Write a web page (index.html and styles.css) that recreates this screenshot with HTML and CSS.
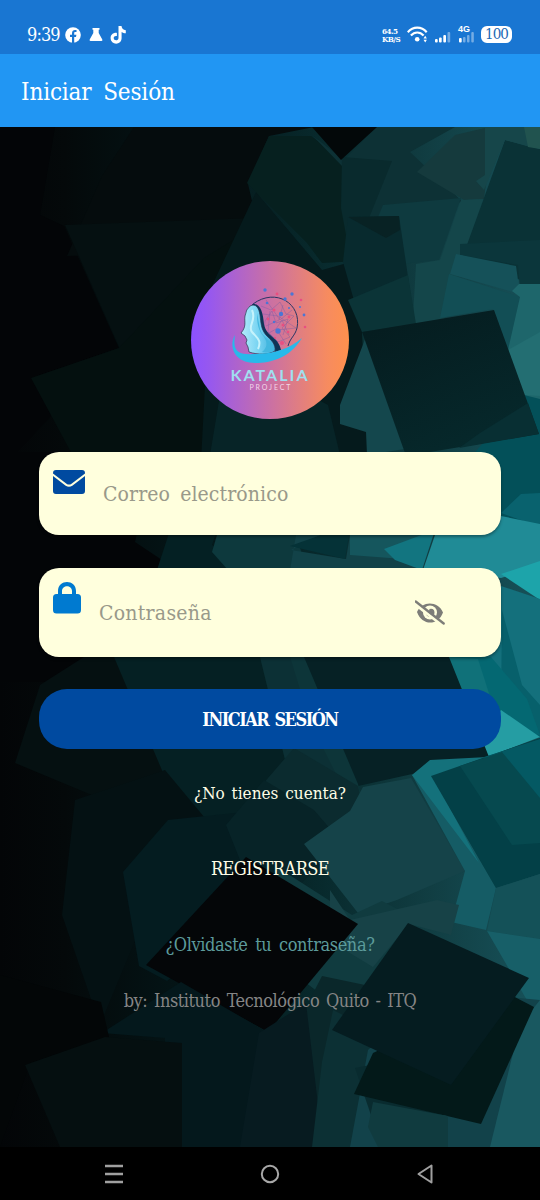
FILE: index.html
```html
<!DOCTYPE html>
<html lang="es">
<head>
<meta charset="utf-8">
<meta name="viewport" content="width=device-width">
<title>Iniciar Sesión</title>
<link rel="stylesheet" href="styles.css">
</head>
<body>
<div class="phone">
  <header class="status">
    <span class="clock">9:39</span>
    <svg class="app-icon" width="16" height="16" viewBox="0 0 16 16"><circle cx="8" cy="8" r="7.8" fill="#fff"/><path d="M7 16V10H5V7.800h2V6.300C7 4 8.300 3 10 3h1.500v2.100h-1.200c-.8 0-1.100.4-1.100 1.100v1.600h2.200L11 10H9.200v6z" fill="#1976d2"/></svg>
    <svg class="app-icon flask" width="14" height="15" viewBox="0 0 14 15"><path d="M3.500 1h7v1.700H9.700V6l3.600 6.500q.5 1.500-1 1.500H1.700q-1.500 0-1-1.500L4.300 6V2.700h-.8z" fill="#fff"/></svg>
    <svg class="app-icon tiktok" width="17" height="18" viewBox="0 0 17 18"><path d="M8.500 0h3c.2 2.300 1.800 4 4.300 4.200v3.100c-1.600 0-3-.5-4.200-1.300v6.100c0 7.500-11 7.300-11 0 0-3.500 3-5.700 6.300-5.200v3.200c-1.800-.5-3.200.5-3.200 2 0 3 4.800 3 4.800-.2z" fill="#fff"/></svg>
    <div class="signals">
      <div class="speed"><span>64.5</span><span>KB/S</span></div>
      <svg class="wifi" width="21" height="17" viewBox="0 0 21 17" fill="none" stroke="#fff" stroke-width="2.200"><path d="M.8 6.200c5.300-6 13.600-6 18.900 0M3.900 9.500c3.700-4 9-4 12.700 0"/><circle cx="10.200" cy="13.300" r="2.300" fill="#fff" stroke="none"/><path d="M16.500 12.500l1.700-2.800 1.700 2.800zM16.500 13.800l1.700 2.800 1.700-2.800z" fill="#fff" stroke="none"/></svg>
      <svg class="bars" width="16" height="11" viewBox="0 0 16 11" fill="#fff"><rect x="0" y="7" width="2.700" height="3.500" rx="1"/><rect x="4" y="5.500" width="2.700" height="5" rx="1"/><rect x="8.300" y="3" width="2.700" height="7.500" rx="1"/><rect x="12.500" y="0" width="2.700" height="10.500" rx="1" opacity=".4"/></svg>
      <div class="mobile"><span>4G</span><svg width="16" height="11" viewBox="0 0 16 11" fill="#fff"><rect x="1" y="6" width="2.700" height="4.500" rx="1"/><rect x="5" y="5" width="2.500" height="5.500" rx="1" opacity=".4"/><rect x="9" y="3" width="2.500" height="7.500" rx="1" opacity=".4"/><rect x="13.300" y="0" width="2.500" height="10.500" rx="1" opacity=".4"/></svg></div>
      <div class="battery">100</div>
    </div>
  </header>
  <div class="appbar"><h1>Iniciar Sesión</h1></div>
  <main class="screen">
    <svg class="backdrop" viewBox="0 127 540 1020" preserveAspectRatio="none" aria-hidden="true">
      <defs>
        <linearGradient id="base" x1="0" x2="1" y1="0" y2="0"><stop offset="0" stop-color="#030507"/><stop offset=".12" stop-color="#04090a"/><stop offset=".35" stop-color="#041517"/><stop offset=".6" stop-color="#082a2d"/><stop offset=".8" stop-color="#113e43"/><stop offset="1" stop-color="#17525a"/></linearGradient>
        <linearGradient id="tile" x1="0" x2=".5" y1="0" y2="1"><stop offset="0" stop-color="#051b1e"/><stop offset="1" stop-color="#06282b"/></linearGradient>
      </defs>
      <path d="M0 127h540v1020H0z" fill="url(#base)"/>
      <path d="M0 127h55L40 215l24 11 55 122-88 30 37 20L0 470z" fill="#030507"/>
      <path d="M134 127h180l-45 9-21 48 8 34-106 36-83 2 35-80z" fill="#050c0d"/>
      <path d="M65 225l190-7 4 50-60 83-78 0z" fill="#051011"/>
      <path d="M119 348l85-90 52-32 6 230H73l-42-78z" fill="#04100f"/>
      <path d="M269 136h42l33 24 14 101-36 2-15-20-60-60z" fill="#06201f"/>
      <path d="M256 192l66 78 36-10 12 220H200l10-190z" fill="#051a1c"/>
      <path d="M313 136l31 24 33-33h78l-45 25 53 50-67 8-19 8-29-2-6-50z" fill="#0d3135"/>
      <path d="M342 157l50 4-25 62 31-7 8 60-50 12-15-80z" fill="#092a2d"/>
      <path d="M312 127h65l-36 33z" fill="#030809"/>
      <path d="M455 135l-38 37 47 28 20-1 2-16 3-56z" fill="#153a3d"/>
      <path d="M383 205l78-7-22 62-38 4-3-47-20 0z" fill="#0e3a3f"/>
      <path d="M461 200l22-1-43 133-28 0 4-68 24-4z" fill="#14464a"/>
      <path d="M505 140l35 9v136l-80-21z" fill="#0a3236"/>
      <path d="M485 127h40l5 20-25-7-21 50-8-9 9-6z" fill="#16464a"/>
      <path d="M524 127h16v22l-12-2z" fill="#21534f"/>
      <path d="M460 244l80-4v50h-20l-2-25-58-10z" fill="#0b363b"/>
      <path d="M456 254l60 12 4 28-70-20z" fill="#155159"/>
      <path d="M449 274l71 23-12 55-15-43-53 9z" fill="#124e55"/>
      <path d="M519 284h21v129l-15-17-17-46 12-53-8-6z" fill="#1e666b"/>
      <path d="M508 350l32-18v64l-16-1z" fill="#236e72"/>
      <path d="M348 217l51-1 16 108-52 8-20-70z" fill="#082a2e"/>
      <path d="M348 217l51-1 1 14-14 8z" fill="#082224"/>
      <path d="M348 300l60-25 8 49-54 8z" fill="#0b3437"/>
      <path d="M340 405l27-71 38 115-38 6-1-23-26-8z" fill="#14474d"/>
      <path d="M300 390l28 15 12 50H210l10-60z" fill="#072427"/>
      <path d="M524 395l16 4v175l-39-5-30-112z" fill="#035059"/>
      <path d="M501 513l20-19 19-1v34z" fill="#09626e"/>
      <path d="M362 332l132-22 45 124-133 22z" fill="url(#tile)"/>
      <path d="M480 433l48-30 11 31-80 14z" fill="#082f33"/>
      <path d="M0 452h155l-20 90 30 20-30 120H0z" fill="#030507"/>
      <path d="M170 530h47l-5 15 60 50-116-22z" fill="#042023"/>
      <path d="M217 535h79l14 45-82-10-16-18z" fill="#0d393d"/>
      <path d="M296 535h25l-30 15 55 9 4-24h80l-14 35H290z" fill="#124248"/>
      <path d="M321 535h28l-4 24-55-13z" fill="#053237"/>
      <path d="M350 535h80l-14 25-66-5z" fill="#15565d"/>
      <path d="M384 549l51-19-13 40-27-10z" fill="#127580"/>
      <path d="M435 535l66-19 39 8v42l-39 12-78-8z" fill="#208b96"/>
      <path d="M501 574l39-13v39z" fill="#1da4aa"/>
      <path d="M501 586l39 13v140l-58-82z" fill="#14707c"/>
      <path d="M502 610l20 75 18 20v33l-39-28z" fill="#07606b"/>
      <path d="M448 657h43l36 42 13 36-52-6z" fill="#046872"/>
      <path d="M448 657l30 2 24 75-28 13z" fill="#107179"/>
      <path d="M501 710l39 27-60 23-10-10z" fill="#259da3"/>
      <path d="M304 657h145l40 100-131 29z" fill="#062125"/>
      <path d="M255 657h49l54 127 6 25-43 35-65-55z" fill="#0d3539"/>
      <path d="M255 657h35l20 65 34 68-80-20z" fill="#0c3035"/>
      <path d="M110 657h150l35 144 0 50-52 8-80-14-47-80z" fill="#052023"/>
      <path d="M84 657h30l50 118-34 36-115-48 25-78z" fill="#051011"/>
      <path d="M75 800l90-30 50 60-65 75-50 120-38-110z" fill="#041113"/>
      <path d="M123 872l45-52 95-10 32 63-128 108-28-15z" fill="#041c20"/>
      <path d="M294 748l64 38 5 25-21 14-50 18-50-35z" fill="#0b2b2f"/>
      <path d="M264 780l50 30 30 35-45 40-55-15-18-45z" fill="#072327"/>
      <path d="M363 787l48-9 54 93-68 29-39 13-54-69 46-33z" fill="#154349"/>
      <path d="M412 775l19 0 65 113-10 42-35-8 14-51z" fill="#155c65"/>
      <path d="M412 775l18-15 58-3-54 21 45 85z" fill="#14717b"/>
      <path d="M431 776l109-38v136l-44 14z" fill="#034047"/>
      <path d="M484 757l56-18v63l-40-8z" fill="#045963"/>
      <path d="M460 766l52 79 28-2v-45l-38-46z" fill="#06494f"/>
      <path d="M496 888l44-14v65l-53-8z" fill="#145158"/>
      <path d="M487 931l53 8v98l-8-28z" fill="#175f68"/>
      <path d="M277 867l75 48 30-14 37 19-49 70-14 31-72-55z" fill="#103b3f"/>
      <path d="M330 890l20 30 87-20 22 5-8 30-42-11-36 43-43-26z" fill="#174247"/>
      <path d="M246 857l112 67-90 108-122-67z" fill="#040608"/>
      <path d="M322 976l43 9-10 45 10 30-60 72-40-45z" fill="#0a272a"/>
      <path d="M181 982l86 50 55 115H165V1038l-63-5z" fill="#04181c"/>
      <path d="M0 975l101 27 8 35-79 26L0 1147z" fill="#030607"/>
      <path d="M25 1065l80-28 77 6v104H60z" fill="#050f10"/>
      <path d="M259 1033l47-30 17 144h-83z" fill="#071b20"/>
      <path d="M333 1010l40 20 10 70 50 5 10 42H312l10-85z" fill="#0c3034"/>
      <path d="M368 1050l65-60 107 10v147H350z" fill="#12424a"/>
      <path d="M520 1025l20-25v147h-50z" fill="#195860"/>
      <path d="M355 1068l75-15 42 56-97 18z" fill="#092b2f"/>
      <path d="M373 1053l130-62 31 16-53 117-127-30z" fill="#031919"/>
      <path d="M408 923l121 55-78 107-119-55z" fill="#051c20"/>
      <path d="M373 1102l75 14 0 31h-70l-10-20z" fill="#103b3f"/>
    </svg>
    <svg class="logo" viewBox="0 0 158 158" role="img" aria-label="Katalia Project">
      <defs><linearGradient id="disc"><stop offset="0" stop-color="#8c52ff"/><stop offset=".12" stop-color="#9758ee"/><stop offset=".5" stop-color="#ca70a4"/><stop offset=".86" stop-color="#f68b60"/><stop offset="1" stop-color="#ff914d"/></linearGradient>
      <linearGradient id="face"><stop offset="0" stop-color="#b5ecfb"/><stop offset=".5" stop-color="#78d4f2"/><stop offset="1" stop-color="#3daedc"/></linearGradient></defs>
      <circle cx="79" cy="79" r="79" fill="url(#disc)"/>
      <path d="M62 43c23-17 49 0 44 24-2 8-7 10-9 18" fill="none" stroke="#293765" stroke-width="1"/>
      <g fill="none" stroke="#755ca5" stroke-width=".4"><path d="M70 45l10 4 9-8 6 12 8 2-12 12 8 9-12 5-9-9-5-2 1-10 7-10 4 12 12-4-5 16M72 53l15 2 18 12-19 2 9 14M75 39l14 20 12-10M75 65l13-6 4-15M78 72l7-4 6-9 7 15M79 50l-2 21 10 10"/></g>
      <g fill="#4b76d5"><circle cx="74" cy="29" r="1.700"/><circle cx="101" cy="33" r="1.700"/><circle cx="94" cy="38" r="1.700"/><circle cx="76" cy="42" r="1.300"/><circle cx="90" cy="53" r="2.200"/><circle cx="87" cy="70" r="2.700"/><circle cx="113" cy="54" r="1.400"/><circle cx="98" cy="47" r="1"/><circle cx="83" cy="61" r="1.200"/><circle cx="109" cy="46" r="1"/></g>
      <g fill="#e84f81"><circle cx="86" cy="33" r="1.400"/><circle cx="110" cy="39" r="1.300"/><circle cx="83" cy="49" r="1.500"/><circle cx="98" cy="56" r="1.400"/><circle cx="77" cy="58" r="1.400"/><circle cx="92" cy="64" r="1.500"/><circle cx="114" cy="66" r="1.300"/><circle cx="97" cy="71" r="1.300"/><circle cx="91" cy="82" r="2"/><circle cx="84" cy="77" r="1"/></g>
      <path d="M61 43c9-1 11 9 12 20 2 13 15 13 17 26l-6 2-16-24z" fill="#0c3558"/>
      <path d="M59 45c6-3 9 2 10 9 1 8 1 14 6 20 5 5 10 9 9 16-7 4-17 4-26 1l-1-5-2-4 1-3-2-4-4-3c6-7 3-11 4-17q1-7 5-10z" fill="url(#face)" stroke="#26324f" stroke-width=".7"/>
      <path d="M66 52c0 10 1 17 7 24 4 6 3 11-2 15 6 1 11 0 12-2 0-9-11-11-14-21z" fill="#43b7df"/>
      <path d="M61 49c5 11-5 16 0 22 5 6 10 8 6 17" stroke="#c5f3fc" stroke-width="2" fill="none"/>
      <path d="M44 74c-3 19 5 20 23 19 17-1 31-5 44-16-12 20-31 25-47 25-20 0-27-16-20-28z" fill="#28b9ea"/>
      <text class="logo-name" x="39.500" y="119.500" textLength="77">KATALIA</text>
      <text class="logo-sub" x="58.500" y="128.500" textLength="41">PROJECT</text>
    </svg>
    <form class="form" onsubmit="return false">
      <div class="field email">
        <svg class="mail" width="32" height="24" viewBox="0 0 32 24"><path d="M3 0h26q3 0 3 3v.5L18.500 13.700q-2.500 1.800-5 0L0 3.500V3q0-3 3-3zM0 6.100l12.700 9.600q3.300 2.200 6.600 0L32 6.100V21q0 3-3 3H3q-3 0-3-3z" fill="#004aa0"/></svg>
        <span class="hint">Correo electrónico</span>
      </div>
      <div class="field password">
        <svg class="lock" width="28" height="32" viewBox="0 0 28 32"><path d="M5 12V9c0-12 18-12 18 0v3h1.500q3.500 0 3.500 3.500V28q0 3.500-3.500 3.500h-21Q0 31.500 0 28V15.500Q0 12 3.500 12zm4 0h10V9C19 2.500 9 2.500 9 9z" fill="#007ad0"/></svg>
        <span class="hint">Contraseña</span>
        <svg class="eye" width="30" height="26" viewBox="0 0 30 26" fill="none"><path d="M2 12C7 .5 23 .5 28 12.500 23 26 7 26 2 12z" fill="#7d7d78"/><circle cx="15" cy="12.500" r="7" fill="#ffffdd"/><path d="M11 12.500q3 .5 3.500-3.500 5-1 5 4-.5 3.500-4.500 4-4-.5-4-4.500z" fill="#7d7d78"/><path d="M0 4l27 21" stroke="#ffffdd" stroke-width="3"/><path d="M.7 1.500l28 22" stroke="#7d7d78" stroke-width="2.300" stroke-linecap="round"/></svg>
      </div>
      <button class="login">INICIAR SESIÓN</button>
    </form>
    <p class="question">¿No tienes cuenta?</p>
    <a class="register">REGISTRARSE</a>
    <a class="forgot">¿Olvidaste tu contraseña?</a>
    <p class="credit">by: Instituto Tecnológico Quito - ITQ</p>
  </main>
  <nav class="navbar">
    <svg width="18" height="20" viewBox="0 0 18 20"><path d="M0 2h18M0 10h18M0 18h18" stroke="#a0a0a0" stroke-width="2.500"/></svg>
    <svg width="20" height="20" viewBox="0 0 20 20"><circle cx="10" cy="10" r="8.200" fill="none" stroke="#a8a8a8" stroke-width="2"/></svg>
    <svg width="16" height="20" viewBox="0 0 16 20"><path d="M14.500 1.500v17L1.500 10z" fill="none" stroke="#a0a0a0" stroke-width="2" stroke-linejoin="round"/></svg>
  </nav>
</div>
</body>
</html>
```
FILE: styles.css
```css
* { box-sizing: border-box; }
body { margin: 0; background: #000; }
.phone { display: flex; flex-direction: column; width: 540px; height: 1200px; overflow: hidden; font-family: "DejaVu Serif Condensed", "DejaVu Serif", serif; font-stretch: condensed; color: #fff; white-space: nowrap; }
h1, p { margin: 0; font-weight: 400; }
svg { display: block; flex: none; }
.status { height: 54px; flex: none; display: flex; align-items: center; padding: 15px 28px 0 27px; background: #1976d2; }
.clock { width: 38px; font-size: 18px; letter-spacing: -.9px; }
.flask { margin-left: 8px; }
.tiktok { margin-left: 7px; }
.signals { margin-left: auto; display: flex; align-items: center; }
.speed { display: flex; flex-direction: column; width: 25px; font-size: 8px; line-height: 8px; font-weight: 700; letter-spacing: -.5px; }
.bars { margin: 5px 0 0 7px; }
.mobile { width: 18px; margin-left: 7px; font: 700 9px/7px "Liberation Sans", sans-serif; }
.mobile svg { margin-top: -1px; }
.battery { width: 31px; height: 17px; margin-left: 5px; border-radius: 6px; background: #fff; color: #1967b4; font-size: 15px; line-height: 17px; text-align: center; letter-spacing: -1px; }
.appbar { height: 73px; flex: none; display: flex; align-items: center; padding: 2px 21px 0; background: #2196f3; }
.appbar h1 { font-size: 24px; letter-spacing: -.15px; word-spacing: 5px; }
.screen { position: relative; isolation: isolate; height: 1020px; flex: none; display: flex; flex-direction: column; align-items: center; padding-top: 134px; }
.backdrop { position: absolute; inset: 0; z-index: -1; width: 100%; height: 100%; }
.logo { width: 158px; height: 158px; }
.logo-name { font: 700 16px Lato, sans-serif; fill: #a0dfef; }
.logo-sub { font: 400 7px Lato, sans-serif; fill: #f3d7e9; }
.form { width: 462px; margin-top: 33px; display: flex; flex-direction: column; gap: 33px; }
.field { display: flex; align-items: flex-start; background: #ffffdd; border-radius: 20px; box-shadow: 0 2px 3px rgba(0,0,0,.35); padding-left: 14px; color: #99998a; font-size: 21px; }
.email { height: 83px; }
.password { height: 89px; margin-top: 0; }
.mail { margin-top: 18px; }
.lock { margin-top: 14px; }
.hint { line-height: 26px; }
.email .hint { margin: 29px 0 0 18px; letter-spacing: .1px; word-spacing: 4px; }
.password .hint { margin: 32px 0 0 18px; letter-spacing: .25px; }
.eye { margin: 32px 56px 0 auto; }
.login { height: 60px; margin-top: -1px; border: 0; border-radius: 28px; background: #004aa0; color: #fff; font: inherit; font-size: 18px; font-weight: 700; letter-spacing: -1.500px; word-spacing: 2px; }
.question, .register, .forgot, .credit { line-height: 24px; }
.question { margin-top: 32px; font-size: 17px; word-spacing: 2px; color: #fffde6; }
.register { margin-top: 52px; font-size: 18px; letter-spacing: -.55px; color: #fffde6; }
.forgot { margin-top: 52px; font-size: 18px; letter-spacing: -.4px; word-spacing: 3px; color: #5c9b9b; }
.credit { margin-top: 32px; font-size: 18px; letter-spacing: -.45px; word-spacing: 2px; color: #858585; }
.navbar { height: 53px; flex: none; display: flex; align-items: center; justify-content: space-between; padding: 0 107px 0 105px; background: #000; }
```
